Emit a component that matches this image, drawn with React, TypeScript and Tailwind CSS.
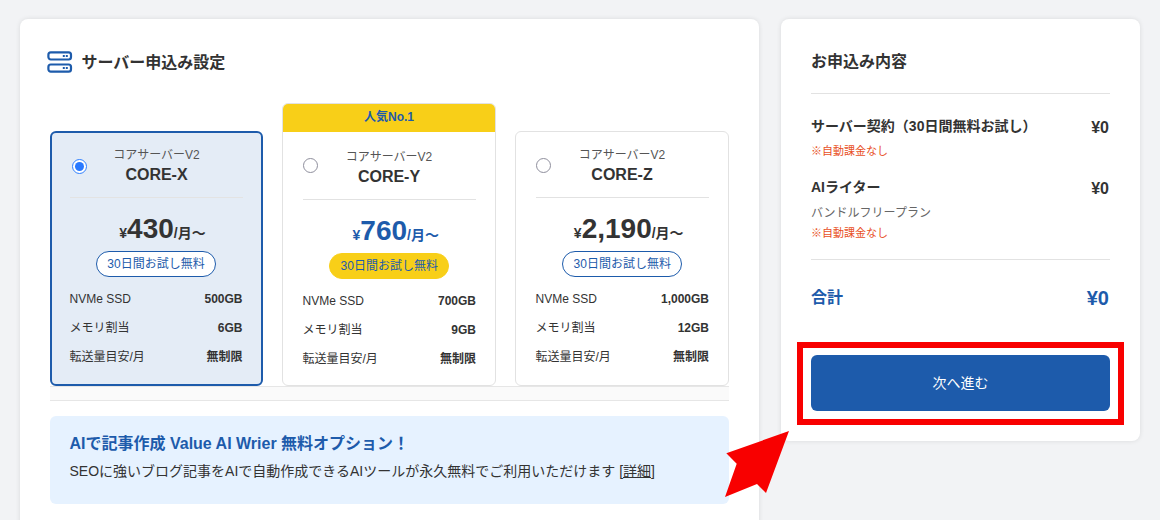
import clsx from 'clsx'

const plans = [
  { id: 'x', name: 'CORE-X', price: '430', ssd: '500GB', memory: '6GB', selected: true, popular: false },
  { id: 'y', name: 'CORE-Y', price: '760', ssd: '700GB', memory: '9GB', selected: false, popular: true },
  { id: 'z', name: 'CORE-Z', price: '2,190', ssd: '1,000GB', memory: '12GB', selected: false, popular: false },
]

type Plan = (typeof plans)[number]

function ServerIcon() {
  return (
    <svg width="26" height="24" viewBox="0 0 26 24" fill="none">
      <rect x="1.4" y="2.3" width="22.6" height="7.2" rx="2.4" stroke="#1d5bab" strokeWidth="2.2" />
      <rect x="1.4" y="14.5" width="22.6" height="7.2" rx="2.4" stroke="#1d5bab" strokeWidth="2.2" />
      <path d="M15.8 5h2v2h-2zM18.8 5h2v2h-2zM15.8 17h2v2h-2zM18.8 17h2v2h-2z" fill="#1d5bab" />
    </svg>
  )
}

function Radio({ checked }: { checked: boolean }) {
  return (
    <span
      className={clsx(
        'flex size-[15px] shrink-0 items-center justify-center rounded-full border bg-white',
        checked ? 'border-[#2f80ff]' : 'border-[#8f8f9d]',
      )}
    >
      {checked && <span className="size-[9px] rounded-full bg-[#2979ff]" />}
    </span>
  )
}

function PlanCard({ plan }: { plan: Plan }) {
  const specs = [
    ['NVMe SSD', plan.ssd],
    ['メモリ割当', plan.memory],
    ['転送量目安/月', '無制限'],
  ]

  return (
    <div
      className={clsx(
        'overflow-hidden rounded-[6px]',
        plan.selected ? 'border-2 border-[#1d5bab] bg-[#e4ecf6]' : 'border border-[#e2e2e2] bg-white',
        plan.popular ? 'h-[283px]' : 'h-[255px]',
      )}
    >
      {plan.popular && (
        <div className="h-[28px] bg-[#f8cf18] text-center text-[12px] leading-[26px] font-bold text-[#1d5bab]">
          人気No.1
        </div>
      )}
      <div
        className={clsx(
          plan.selected ? 'pt-[12px] pr-[18.5px] pl-[17.5px]' : 'pr-[19px] pl-[19.5px]',
          plan.popular && 'pt-[15px]',
          !plan.selected && !plan.popular && 'pt-[13px]',
        )}
      >
        <div
          className={clsx(
            'flex h-[53px] border-b',
            plan.selected ? 'border-[#e3e3e3]' : 'border-[#e2e2e2]',
          )}
        >
          <div
            className={clsx(
              'w-[15px]',
              plan.selected ? 'ml-[2px] pt-[14px]' : 'ml-[0.5px]',
              plan.popular && 'pt-[11px]',
              !plan.selected && !plan.popular && 'pt-[13px]',
            )}
          >
            <Radio checked={plan.selected} />
          </div>
          <div className="mr-[16px] flex-1 text-center">
            <p className="text-[12px] leading-[20px] text-[#555]">コアサーバーV2</p>
            <p className="text-[16px] leading-[20px] font-bold">{plan.name}</p>
          </div>
        </div>

        <p
          className={clsx(
            'mt-[13px] h-[36px] pl-[13px] text-center text-[14px] leading-[36px] font-bold whitespace-nowrap',
            plan.popular && 'text-[#1d5bab]',
          )}
        >
          ¥<span className="text-[28px]">{plan.price}</span>/月〜
        </p>

        <div
          className={clsx(
            'mx-auto mt-[4px] h-[26px] w-[120px] rounded-full border text-center text-[12px] leading-[24px] whitespace-nowrap text-[#1d5bab]',
            plan.popular ? 'border-[#f8cf18] bg-[#f8cf18]' : 'border-[#1d5bab] bg-white',
          )}
        >
          30日間お試し無料
        </div>

        <dl className="mt-[8px] text-[12px] leading-[29px]">
          {specs.map(([label, value]) => (
            <div key={label} className="flex justify-between">
              <dt>{label}</dt>
              <dd className="font-bold">{value}</dd>
            </div>
          ))}
        </dl>
      </div>
    </div>
  )
}

function Summary() {
  return (
    <aside className="h-[422px] w-[359px] rounded-[8px] bg-white px-[30px] shadow-[0_0_5px_rgba(0,0,0,0.1)]">
      <h2 className="h-[75px] border-b border-[#e2e2e2] pt-[31px] text-[16px] leading-[24px] font-bold">
        お申込み内容
      </h2>

      <div className="h-[166px] border-b border-[#e2e2e2] pt-[22px]">
        <div className="flex h-[20px] justify-between leading-[20px] font-bold">
          <p className="text-[14px]">サーバー契約（30日間無料お試し）</p>
          <p className="pt-[2px] pr-px text-[16px]">¥0</p>
        </div>
        <p className="mt-[7px] text-[11px] leading-[16px] text-[#e8501e]">※自動課金なし</p>

        <div className="mt-[18px] flex h-[20px] justify-between leading-[20px] font-bold">
          <p className="text-[14px]">AIライター</p>
          <p className="pt-[2px] pr-px text-[16px]">¥0</p>
        </div>
        <p className="mt-[6px] text-[12px] leading-[20px] text-[#666]">バンドルフリープラン</p>
        <p className="mt-[2px] text-[11px] leading-[16px] text-[#e8501e]">※自動課金なし</p>
      </div>

      <div className="mt-[25px] flex h-[26px] justify-between leading-[26px] font-bold text-[#1d5bab]">
        <p className="text-[16px]">合計</p>
        <p className="pr-px text-[20px]">¥0</p>
      </div>

      <div className="relative mt-[44px]">
        <button className="block h-[56px] w-full rounded-[6px] bg-[#1d5bab] text-[14px] leading-[55px] text-white">
          次へ進む
        </button>
        <div className="absolute -top-[13px] -right-[14px] -bottom-[14px] -left-[14px] border-[6px] border-[#f80000]" />
      </div>
    </aside>
  )
}

export default function App() {
  return (
    <div className="relative flex h-[520px] w-[1160px] gap-[22px] overflow-hidden bg-[#f2f3f5] pt-[19px] pl-[20px] font-['Liberation_Sans','Noto_Sans_CJK_JP',sans-serif] text-[#333]">
      <main className="h-[540px] w-[739px] rounded-[8px] bg-white px-[30px] shadow-[0_0_5px_rgba(0,0,0,0.1)]">
        <div className="-ml-[3px] flex h-[84px] gap-[8.5px] pt-[31px]">
          <ServerIcon />
          <h1 className="text-[16px] leading-[25px] font-bold">サーバー申込み設定</h1>
        </div>

        <div className="grid grid-cols-[213px_214px_214px] items-end gap-[19px]">
          {plans.map((plan) => (
            <PlanCard key={plan.id} plan={plan} />
          ))}
        </div>
        <div className="h-[15px] border-y border-[#e6e6e6] bg-[#fafafa]" />

        <div className="mt-[15px] h-[88px] rounded-[6px] bg-[#e6f2ff] px-[19.5px] pt-[16px]">
          <p className="text-[16px] leading-[24px] font-bold text-[#1d5bab]">
            AIで記事作成 Value AI Wrier 無料オプション！
          </p>
          <p className="mt-[3px] text-[14px] leading-[24px]">
            SEOに強いブログ記事をAIで自動作成できるAIツールが永久無料でご利用いただけます{' '}
            <a className="underline">[詳細]</a>
          </p>
        </div>
      </main>

      <Summary />

      {/* Callout arrow pointing at the submit button */}
      <svg className="absolute top-[430px] left-[724px]" width="66" height="68" viewBox="724 430 66 68">
        <path d="M789 431L726.3 453.3L736.7 463.7L725 497L757 484L766 493Z" fill="#f80000" />
      </svg>
    </div>
  )
}
